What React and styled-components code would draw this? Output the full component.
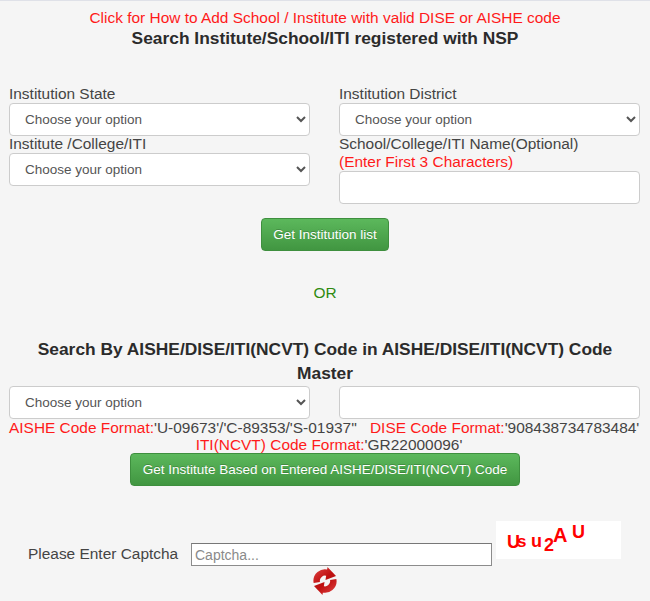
import React from 'react'
import styled, { createGlobalStyle } from 'styled-components'

const GlobalStyle = createGlobalStyle`
  html, body {
    margin: 0;
    padding: 0;
    background: #f5f5f5;
  }
  body {
    font-family: "Liberation Sans", Arial, sans-serif;
    color: #333;
  }
  * {
    box-sizing: border-box;
  }
`

const Page = styled.div`
  width: 650px;
  height: 601px;
  overflow: hidden;
  border-top: 1px solid #dfe1e8;
  background: #f5f5f5;
  padding: 8px 9px 0 9px;
`

const Notice = styled.a`
  display: block;
  text-align: center;
  color: #ff1a1a;
  font-size: 15.44px;
  line-height: 18px;
`

const Heading = styled.h2`
  margin: 1px 0 0;
  text-align: center;
  font-size: 17.37px;
  line-height: 20px;
  font-weight: 700;
  color: #2b2b2b;
`

const FormGrid = styled.div`
  display: grid;
  grid-template-columns: 301px 301px;
  column-gap: 29px;
  margin-top: ${(p) => p.$top}px;
`

const Field = styled.div`
  display: flex;
  flex-direction: column;
`

const Label = styled.label`
  font-size: 15.44px;
  line-height: 15px;
  padding-bottom: 2px;
  color: #444;
`

const Hint = styled.span`
  font-size: 15.44px;
  line-height: 18px;
  color: #ff1a1a;
`

const Select = styled.select`
  height: 33px;
  padding: 0 11px;
  border: 1px solid #ccc;
  border-radius: 4px;
  background: #fff;
  font-family: inherit;
  font-size: 13.5px;
  color: #555;
`

const TextInput = styled.input`
  height: 33px;
  width: 100%;
  border: 1px solid #ccc;
  border-radius: 4px;
  background: #fff;
`

const Center = styled.div`
  display: flex;
  justify-content: center;
  margin-top: ${(p) => p.$top}px;
`

const GreenButton = styled.button`
  height: 33px;
  padding: 0 11.5px;
  border: 1px solid #3e8f3e;
  border-radius: 4px;
  background: linear-gradient(to bottom, #5cb85c, #419641);
  color: #fff;
  font-family: inherit;
  font-size: 13.5px;
  text-shadow: 0 -1px 0 rgba(0, 0, 0, 0.2);
`

const Or = styled.div`
  margin-top: 33px;
  text-align: center;
  font-size: 15.44px;
  line-height: 18px;
  color: #2f8a10;
`

const SearchHeading = styled(Heading)`
  margin: 35px auto 0;
  width: 610px;
  line-height: 24px;
`

const FormatLine = styled.div`
  font-size: 15.44px;
  line-height: 17px;
  color: #444;
  white-space: nowrap;
  text-align: ${(p) => p.$align || 'left'};
  padding-left: ${(p) => (p.$align ? 8 : 0)}px;
`

const Red = styled.span`
  color: #ff1a1a;
`

const CaptchaRow = styled.div`
  display: flex;
  align-items: flex-start;
  margin-top: 35px;
  padding-left: 19px;
`

const CaptchaLabel = styled.label`
  width: 163px;
  margin-top: 24px;
  font-size: 15.44px;
  line-height: 18px;
  color: #444;
`

const CaptchaInput = styled.input`
  width: 301px;
  height: 23px;
  margin-top: 22px;
  padding: 0 3px;
  border: 1px solid #8c8c8c;
  border-top-color: #777;
  background: #fff;
  font-family: inherit;
  font-size: 14px;
  &::placeholder {
    color: #8a8a8a;
  }
`

const CaptchaBox = styled.div`
  position: relative;
  width: 125px;
  height: 38px;
  margin-left: 4px;
  background: #fff;
  font-family: "Liberation Sans", sans-serif;
  font-weight: 700;
  color: #f00;
`

const CaptchaChar = styled.span`
  position: absolute;
  left: ${(p) => p.$x}px;
  top: ${(p) => p.$y}px;
  font-size: ${(p) => p.$size}px;
  line-height: 1;
`

const RefreshWrap = styled.div`
  display: flex;
  justify-content: center;
  margin-top: 1px;
`

const RefreshArrow = ({ flip }) => (
  <g transform={flip ? 'rotate(180 12 14)' : undefined}>
    <path d="M3.8 15.5 A8.4 8.4 0 0 1 15 6" fill="none" stroke="url(#rg)" strokeWidth="6.4" />
    <path d="M14.5 0 L23 9 L12.5 13 Z" fill="url(#rg)" />
  </g>
)

const RefreshIcon = () => (
  <svg width="24" height="28" viewBox="0 0 24 28">
    <defs>
      <linearGradient id="rg" gradientUnits="userSpaceOnUse" x1="0" y1="0" x2="24" y2="28">
        <stop offset="0" stopColor="#e04848" />
        <stop offset="0.45" stopColor="#c01010" />
        <stop offset="1" stopColor="#a81414" />
      </linearGradient>
    </defs>
    <RefreshArrow />
    <RefreshArrow flip />
  </svg>
)

const App = () => {
  return (
    <Page>
      <GlobalStyle />
      <Notice>Click for How to Add School / Institute with valid DISE or AISHE code</Notice>
      <Heading>Search Institute/School/ITI registered with NSP</Heading>

      <FormGrid $top={38}>
        <Field>
          <Label>Institution State</Label>
          <Select>
            <option>Choose your option</option>
          </Select>
          <Label>Institute /College/ITI</Label>
          <Select>
            <option>Choose your option</option>
          </Select>
        </Field>
        <Field>
          <Label>Institution District</Label>
          <Select>
            <option>Choose your option</option>
          </Select>
          <Label>School/College/ITI Name(Optional)</Label>
          <Hint>(Enter First 3 Characters)</Hint>
          <TextInput />
        </Field>
      </FormGrid>

      <Center $top={14}>
        <GreenButton>Get Institution list</GreenButton>
      </Center>

      <Or>OR</Or>

      <SearchHeading>Search By AISHE/DISE/ITI(NCVT) Code in AISHE/DISE/ITI(NCVT) Code Master</SearchHeading>

      <FormGrid $top={1}>
        <Select>
          <option>Choose your option</option>
        </Select>
        <TextInput />
      </FormGrid>

      <FormatLine>
        <Red>AISHE Code Format:</Red>'U-09673'/'C-89353/'S-01937''&nbsp;&nbsp;&nbsp;<Red>DISE Code Format:</Red>'908438734783484'
      </FormatLine>
      <FormatLine $align="center">
        <Red>ITI(NCVT) Code Format:</Red>'GR22000096'
      </FormatLine>

      <Center $top={0}>
        <GreenButton>Get Institute Based on Entered AISHE/DISE/ITI(NCVT) Code</GreenButton>
      </Center>

      <CaptchaRow>
        <CaptchaLabel>Please Enter Captcha</CaptchaLabel>
        <CaptchaInput placeholder="Captcha..." />
        <CaptchaBox>
          <CaptchaChar $x={11} $y={12} $size={18}>U</CaptchaChar>
          <CaptchaChar $x={21} $y={12} $size={17}>s</CaptchaChar>
          <CaptchaChar $x={35} $y={11} $size={18}>u</CaptchaChar>
          <CaptchaChar $x={48} $y={15} $size={18}>2</CaptchaChar>
          <CaptchaChar $x={57} $y={4} $size={20}>A</CaptchaChar>
          <CaptchaChar $x={76} $y={2} $size={18}>U</CaptchaChar>
        </CaptchaBox>
      </CaptchaRow>

      <RefreshWrap>
        <RefreshIcon />
      </RefreshWrap>
    </Page>
  )
}

export default App
